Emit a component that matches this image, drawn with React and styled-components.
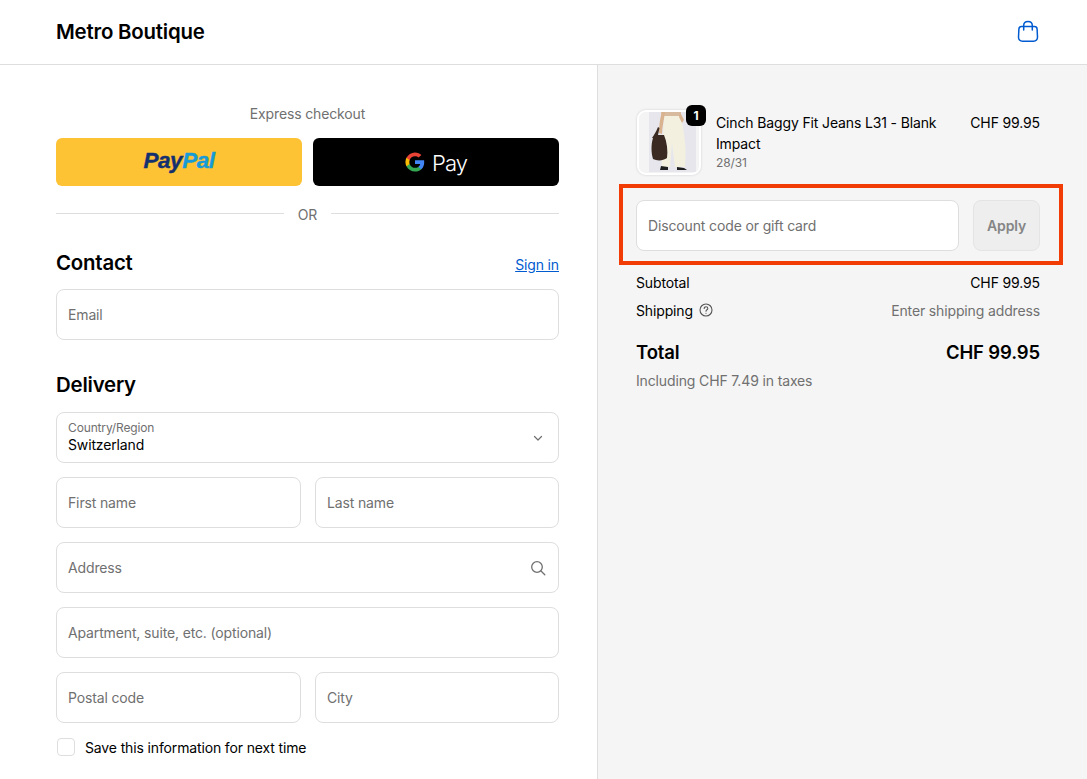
import React from "react";
import styled, { createGlobalStyle } from "styled-components";

const Global = createGlobalStyle`
  html, body { margin: 0; padding: 0; background: #fff; }
  body { font-family: Inter, "Liberation Sans", sans-serif; color: #000; letter-spacing: -0.14px; -webkit-font-smoothing: antialiased; }
  #root { height: 100vh; overflow: hidden; }
  * { box-sizing: border-box; }
`;

const Page = styled.div`
  display: flex;
  flex-direction: column;
  height: 779px;
`;

const Header = styled.header`
  flex: 0 0 65px;
  display: flex;
  align-items: center;
  justify-content: space-between;
  padding: 0 48px 2px 56px;
  border-bottom: 1px solid #dedede;
`;

const Brand = styled.div`
  font-size: 20.4px;
  font-weight: 600;
  letter-spacing: -0.2px;
`;

const BagSlot = styled.span`
  display: flex;
  margin-top: 1px;
`;

const Columns = styled.div`
  flex: 1;
  display: grid;
  grid-template-columns: 598px 1fr;
  min-height: 0;
`;

const Main = styled.main`
  padding: 39px 38px 0 56px;
  border-right: 1px solid #dedede;
  overflow: hidden;
`;

const Aside = styled.aside`
  background: #f5f5f5;
  padding: 45px 47px 0 38px;
`;

const ExpressLabel = styled.div`
  font-size: 14px;
  line-height: 20px;
  color: #707070;
  text-align: center;
`;

const ExpressRow = styled.div`
  display: grid;
  grid-template-columns: 1fr 1fr;
  gap: 11px;
  margin-top: 14px;
`;

const PayButton = styled.div`
  height: 48px;
  border-radius: 6px;
  background: ${(p) => p.$bg};
  display: flex;
  align-items: center;
  justify-content: center;
`;

const PayPalMark = styled.span`
  font-family: "Liberation Sans", sans-serif;
  font-size: 22.5px;
  font-weight: 700;
  font-style: italic;
  letter-spacing: -0.5px;
  color: #14306f;
  -webkit-text-stroke: 0.4px currentColor;
  margin-top: -2px;
`;

const PalPart = styled.span`
  color: #179bd7;
`;

const GPayText = styled.span`
  font-size: 22px;
  font-weight: 300;
  color: #fff;
  margin-left: 7px;
  margin-top: 1px;
  letter-spacing: -1px;
`;

const Divider = styled.div`
  display: flex;
  align-items: center;
  gap: 14px;
  height: 20px;
  margin-top: 18px;
  font-size: 14px;
  color: #707070;
  &::before, &::after {
    content: "";
    flex: 1;
    height: 1px;
    background: #dedede;
    margin-top: -2px;
  }
`;

const SectionHead = styled.div`
  display: flex;
  align-items: center;
  justify-content: space-between;
  height: 24px;
  margin-top: ${(p) => p.$top}px;
  margin-bottom: ${(p) => p.$bottom}px;
`;

const Heading = styled.h2`
  margin: -1px 0 0;
  font-size: 20.4px;
  font-weight: 600;
  letter-spacing: -0.2px;
`;

const SignIn = styled.a`
  font-size: 14px;
  color: #005bd1;
  text-decoration: underline;
  margin-top: 3px;
`;

const Field = styled.div`
  position: relative;
  min-width: 0;
  height: 51px;
  background: #fff;
  border: 1px solid #dedede;
  border-radius: 8px;
  padding: 0 11px;
  display: flex;
  align-items: center;
  justify-content: space-between;
  font-size: 14px;
  color: #707070;
`;

const DiscountField = styled(Field)`
  flex: 1;
`;

const Stack = styled.div`
  display: flex;
  flex-direction: column;
  gap: 14px;
`;

const Pair = styled.div`
  display: grid;
  grid-template-columns: 245px 244px;
  gap: 14px;
`;

const SelectText = styled.div`
  display: flex;
  flex-direction: column;
  padding-bottom: 1px;
`;

const SelectLabel = styled.span`
  font-size: 12px;
  line-height: 14px;
  color: #707070;
`;

const SelectValue = styled.span`
  font-size: 14px;
  line-height: 19px;
  color: #000;
`;

const SaveRow = styled.div`
  display: flex;
  align-items: center;
  gap: 10px;
  height: 20px;
  margin-top: 14px;
  font-size: 14px;
`;

const Check = styled.span`
  width: 18px;
  height: 18px;
  border: 1px solid #dedede;
  border-radius: 4px;
  background: #fff;
  margin-left: 1px;
`;

const Item = styled.div`
  display: flex;
  align-items: flex-start;
`;

const ThumbWrap = styled.div`
  position: relative;
  flex: 0 0 64px;
  height: 65px;
  margin-left: 1px;
`;

const Thumb = styled.div`
  width: 64px;
  height: 65px;
  border: 2.5px solid #fff;
  border-radius: 9px;
  overflow: hidden;
  background: #f3f3f3;
  box-shadow: 0 0 2px 1px rgba(0,0,0,0.07);
`;

const Badge = styled.span`
  position: absolute;
  top: -5px;
  right: -5px;
  width: 20px;
  height: 21px;
  border-radius: 6px;
  background: #000;
  color: #fff;
  font-size: 12px;
  font-weight: 700;
  display: flex;
  align-items: center;
  justify-content: center;
`;

const ItemInfo = styled.div`
  flex: 1;
  margin-left: 15px;
  padding-right: 24px;
  font-size: 14px;
  line-height: 21px;
  margin-top: 2px;
`;

const Variant = styled.div`
  font-size: 12px;
  line-height: 15px;
  color: #707070;
  margin-top: 1px;
`;

const Price = styled.div`
  font-size: 14px;
  line-height: 21px;
  margin-top: 2px;
  white-space: nowrap;
`;

const DiscountRow = styled.div`
  position: relative;
  display: flex;
  gap: 14px;
  margin-top: 25px;
  &::after {
    content: "";
    position: absolute;
    left: -17px;
    right: -23px;
    top: -16px;
    bottom: -14px;
    border: 4px solid #f23c05;
    pointer-events: none;
  }
`;

const ApplyButton = styled.div`
  flex: 0 0 67px;
  height: 51px;
  border: 1px solid #e4e4e4;
  border-radius: 8px;
  background: #eeeeee;
  color: #858585;
  font-size: 14px;
  font-weight: 600;
  display: flex;
  align-items: center;
  justify-content: center;
`;

const Line = styled.div`
  display: flex;
  align-items: center;
  justify-content: space-between;
  height: 20px;
  margin-top: ${(p) => p.$top}px;
  font-size: 14px;
`;

const LineLabel = styled.span`
  display: flex;
  align-items: center;
  gap: 6px;
`;

const Muted = styled.span`
  color: #707070;
`;

const TotalLine = styled.div`
  display: flex;
  align-items: center;
  justify-content: space-between;
  height: 24px;
  margin-top: 20px;
  font-size: 18.5px;
  font-weight: 600;
`;

const TaxNote = styled.div`
  font-size: 14px;
  line-height: 20px;
  color: #707070;
  margin-top: 7px;
`;

const BagIcon = () => (
  <svg width="22" height="24" viewBox="0 0 22 24" fill="none" stroke="#005bd1" strokeWidth="1.5" strokeLinejoin="round" strokeLinecap="round">
    <path d="M4.500 6.500h13c1.500 0 2.500 1 2.600 2.500l.4 8c.1 2.600-1.400 4.200-4 4.200H5.500c-2.600 0-4.100-1.600-4-4.200l.4-8c.1-1.500 1.100-2.500 2.600-2.500z" />
    <path d="M6.700 10V5.500C6.700 3 8.500 1.500 11 1.500S15.300 3 15.300 5.500V10" />
  </svg>
);

const GLogo = () => (
  <svg width="20" height="20" viewBox="0 0 48 48">
    <path fill="#4285F4" d="M46.100 24.500c0-1.600-.1-3.100-.4-4.500H24v9h12.400c-.5 2.900-2.200 5.300-4.600 6.900v5.700h7.400c4.400-4 6.900-10 6.900-17.100z" />
    <path fill="#34A853" d="M24 47c6.200 0 11.400-2 15.200-5.500l-7.400-5.700c-2.100 1.400-4.700 2.200-7.800 2.200-6 0-11.100-4-12.900-9.500H3.500v5.900C7.300 42 15 47 24 47z" />
    <path fill="#FBBC05" d="M11.100 28.500c-.5-1.400-.7-2.900-.7-4.500s.3-3.100.7-4.500v-5.900H3.500C2 16.700 1 20.200 1 24s.9 7.300 2.500 10.400l7.600-5.900z" />
    <path fill="#EA4335" d="M24 10c3.400 0 6.400 1.200 8.800 3.400l6.500-6.500C35.400 3.300 30.200 1 24 1 15 1 7.300 6.200 3.500 13.600l7.600 5.900C12.900 14 18 10 24 10z" />
  </svg>
);

const Chevron = () => (
  <svg width="12" height="12" viewBox="0 0 12 12" fill="none" stroke="#707070" strokeWidth="1.200" strokeLinecap="round" strokeLinejoin="round" style={{ marginRight: 3 }}>
    <path d="M2.500 4.500 6 8l3.500-3.500" />
  </svg>
);

const SearchIcon = () => (
  <svg width="16" height="16" viewBox="0 0 16 16" fill="none" stroke="#707070" strokeWidth="1.300" strokeLinecap="round" style={{ marginRight: 1 }}>
    <circle cx="7" cy="7" r="5.300" />
    <path d="m11 11 3.800 3.800" />
  </svg>
);

const HelpIcon = () => (
  <svg width="14" height="14" viewBox="0 0 14 14" fill="none" stroke="#555" strokeWidth="1.100" strokeLinecap="round">
    <circle cx="7" cy="7" r="6" />
    <path d="M5.200 5.500c0-1 .8-1.700 1.800-1.700s1.800.7 1.800 1.600c0 1.400-1.800 1.400-1.800 2.800" />
    <path d="M7 10.200v.1" />
  </svg>
);

const ProductArt = () => (
  <svg width="59" height="60" viewBox="0 0 59 60" style={{ display: "block" }}>
    <rect width="59" height="60" fill="#f4f4f4" />
    <rect x="10" y="0" width="47" height="60" fill="#e6e6ec" />
    <path d="M22 0h20l-1 6H23z" fill="#d8bb9e" />
    <path d="M25 4h17c1.500 8 4 22 4.500 32 .3 7 0 13-.5 19h-10l-3-24-2 24h-8c-1-11-.5-24 1-32z" fill="#f3f0e0" />
    <path d="M23 0c-2 6-3 13-3 21l3 1c0-7 2-14 3-22z" fill="#d9b28f" />
    <path d="M41 0l4 8-2 3-3-6z" fill="#d9b28f" />
    <path d="M13 26c2-3 4-6 6-11l1.500 1-1.500 7h6c3 7 4 16 3 23-4 3-10 3-14 1-2-6-2-15 0-21z" fill="#3a2a22" />
    <path d="M22 54l7 1v3h-8zM38 55l7 1 3 2h-10z" fill="#1f1f1f" />
  </svg>
);

export default function App() {
  return (
    <Page>
      <Global />
      <Header>
        <Brand>Metro Boutique</Brand>
        <BagSlot><BagIcon /></BagSlot>
      </Header>
      <Columns>
        <Main>
          <ExpressLabel>Express checkout</ExpressLabel>
          <ExpressRow>
            <PayButton $bg="#fec235">
              <PayPalMark>Pay<PalPart>Pal</PalPart></PayPalMark>
            </PayButton>
            <PayButton $bg="#000">
              <GLogo />
              <GPayText>Pay</GPayText>
            </PayButton>
          </ExpressRow>
          <Divider>OR</Divider>
          <SectionHead $top={27} $bottom={14}>
            <Heading>Contact</Heading>
            <SignIn>Sign in</SignIn>
          </SectionHead>
          <Field>Email</Field>
          <SectionHead $top={33} $bottom={15}>
            <Heading>Delivery</Heading>
          </SectionHead>
          <Stack>
            <Field>
              <SelectText>
                <SelectLabel>Country/Region</SelectLabel>
                <SelectValue>Switzerland</SelectValue>
              </SelectText>
              <Chevron />
            </Field>
            <Pair>
              <Field>First name</Field>
              <Field>Last name</Field>
            </Pair>
            <Field>Address<SearchIcon /></Field>
            <Field>Apartment, suite, etc. (optional)</Field>
            <Pair>
              <Field>Postal code</Field>
              <Field>City</Field>
            </Pair>
          </Stack>
          <SaveRow><Check />Save this information for next time</SaveRow>
        </Main>
        <Aside>
          <Item>
            <ThumbWrap>
              <Thumb><ProductArt /></Thumb>
              <Badge>1</Badge>
            </ThumbWrap>
            <ItemInfo>
              Cinch Baggy Fit Jeans L31 - Blank Impact
              <Variant>28/31</Variant>
            </ItemInfo>
            <Price>CHF 99.95</Price>
          </Item>
          <DiscountRow>
            <DiscountField>Discount code or gift card</DiscountField>
            <ApplyButton>Apply</ApplyButton>
          </DiscountRow>
          <Line $top={21}><span>Subtotal</span><span>CHF 99.95</span></Line>
          <Line $top={8}>
            <LineLabel>Shipping <HelpIcon /></LineLabel>
            <Muted>Enter shipping address</Muted>
          </Line>
          <TotalLine><span>Total</span><span>CHF 99.95</span></TotalLine>
          <TaxNote>Including CHF 7.49 in taxes</TaxNote>
        </Aside>
      </Columns>
    </Page>
  );
}
